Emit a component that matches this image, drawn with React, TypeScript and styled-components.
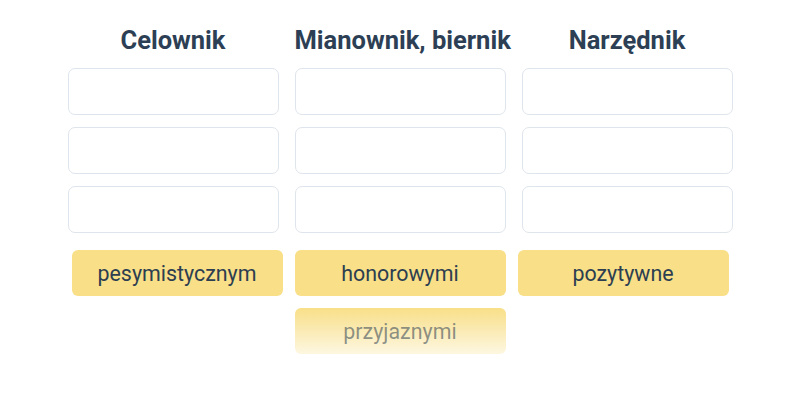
import React from "react";
import styled, { createGlobalStyle } from "styled-components";

const GlobalStyle = createGlobalStyle`
  body {
    margin: 0;
    background: #ffffff;
    font-family: Roboto, "Liberation Sans", Arial, sans-serif;
  }
`;

// Whole exercise area
const Exercise = styled.div`
  display: flex;
  flex-direction: column;
  align-items: center;
  padding-top: 24px;
`;

// Three category columns
const Columns = styled.div`
  display: grid;
  grid-template-columns: repeat(3, 211px);
  column-gap: 16px;
`;

const Column = styled.div`
  display: flex;
  flex-direction: column;
  gap: 12px;
`;

const Heading = styled.h2`
  margin: 0;
  font-size: 25.5px;
  line-height: 32px;
  font-weight: 700;
  color: #2d3f55;
  text-align: center;
  white-space: nowrap;
`;

// Empty drop target
const Slot = styled.div`
  box-sizing: border-box;
  height: 47px;
  border: 1px solid #dfe5ec;
  border-radius: 7px;
  background: #ffffff;
`;

// Word bank
const Bank = styled.div`
  display: flex;
  flex-wrap: wrap;
  justify-content: center;
  gap: 12px 12px;
  width: 658px;
  margin-top: 17px;
`;

const Chip = styled.div<{ $faded?: boolean }>`
  box-sizing: border-box;
  width: 211px;
  height: 46px;
  display: flex;
  align-items: center;
  justify-content: center;
  border-radius: 6px;
  font-size: 21.4px;
  color: ${(p) => (p.$faded ? "rgba(45, 62, 80, 0.55)" : "#2d3e50")};
  background: ${(p) =>
    p.$faded ? "linear-gradient(to bottom, #f8df88, #fdf7e1)" : "#f8df88"};
`;

const columns = ["Celownik", "Mianownik, biernik", "Narzędnik"];
const words = ["pesymistycznym", "honorowymi", "pozytywne"];

const App = () => (
  <>
    <GlobalStyle />
    <Exercise>
      <Columns>
        {columns.map((title) => (
          <Column key={title}>
            <Heading>{title}</Heading>
            <Slot />
            <Slot />
            <Slot />
          </Column>
        ))}
      </Columns>
      <Bank>
        {words.map((w) => (
          <Chip key={w}>{w}</Chip>
        ))}
        <Chip $faded>przyjaznymi</Chip>
      </Bank>
    </Exercise>
  </>
);

export default App;
